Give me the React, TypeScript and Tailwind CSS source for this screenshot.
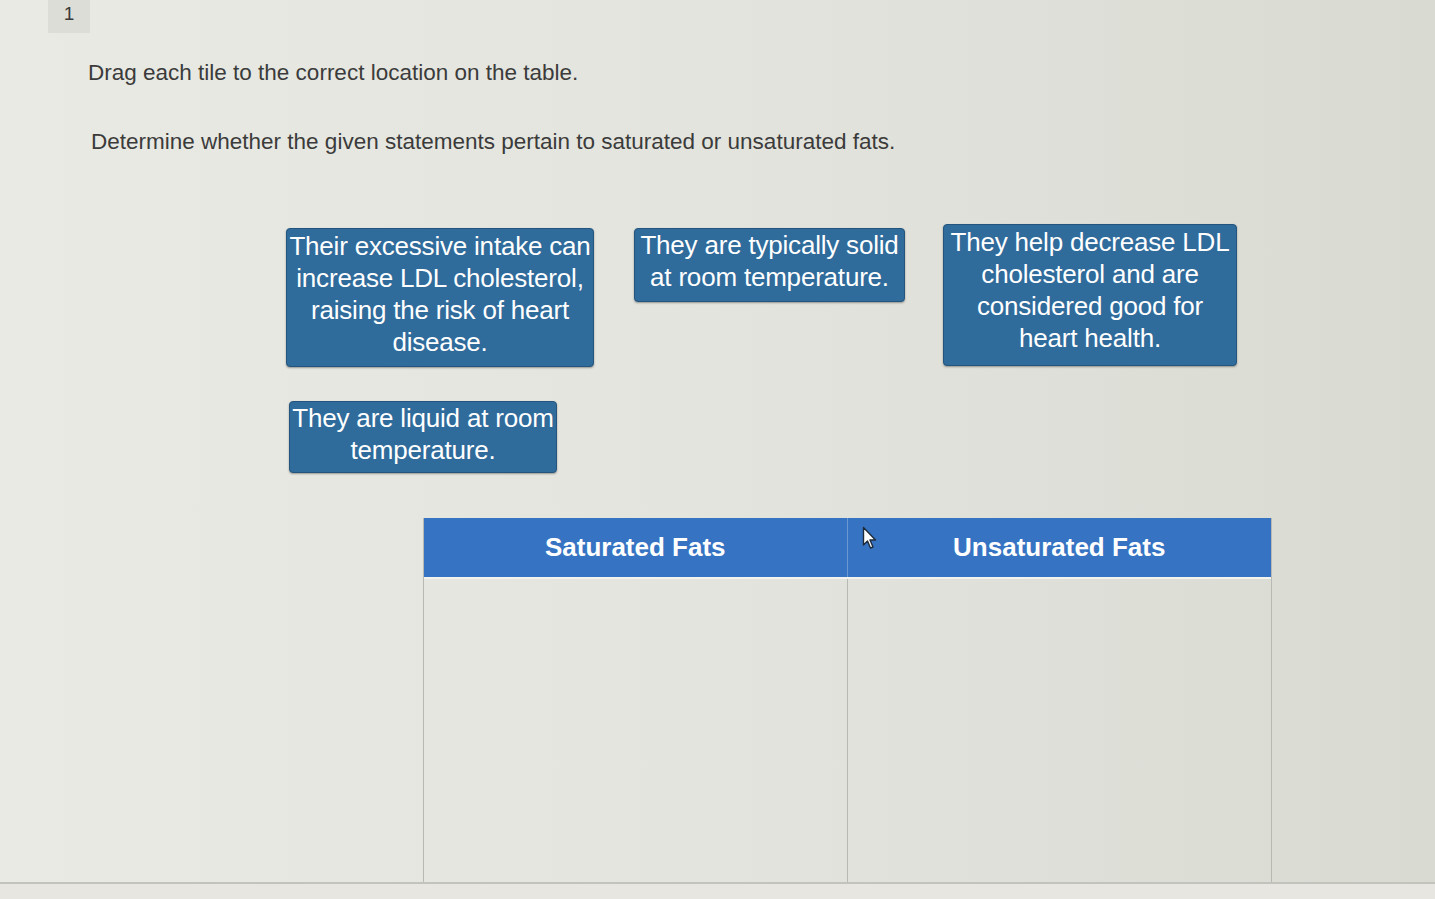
import React from "react";

const tileClass =
  "rounded-[4px] border border-[#23557f] bg-[#2f6b9b] text-center text-white text-[26px] leading-[32px] tracking-[-0.2px] shadow-[0_1px_2px_rgba(0,0,0,0.35)]";

function Cursor() {
  return (
    <svg width="16" height="24" viewBox="0 0 16 24" className="absolute left-[438px] top-[8px]">
      <path
        d="M1.5 1.5 L1.5 19 L5.5 15 L8.5 22 L11 21 L8 14 L13.5 14 Z"
        fill="#ffffff"
        stroke="#1d2a3a"
        strokeWidth="1.4"
        strokeLinejoin="round"
      />
    </svg>
  );
}

export default function App() {
  return (
    <div
      className="flex h-[899px] w-[1435px] flex-col overflow-hidden bg-gradient-to-r from-[#e9eae4] via-[#e3e4dd] to-[#d9dad2] text-[#333]"
      style={{ fontFamily: '"Liberation Sans", Arial, sans-serif' }}
    >
      {/* top tab strip */}
      <div className="flex h-[33px] shrink-0">
        <div className="ml-[48px] flex w-[42px] items-start justify-center bg-[#dcddd6] text-[19px] text-[#3a3a3a]">
          1
        </div>
      </div>

      {/* instructions */}
      <div className="ml-[88px] mt-[28px] text-[22.5px] leading-[24px] text-[#3b3b3b]">
        Drag each tile to the correct location on the table.
      </div>
      <div className="ml-[91px] mt-[45px] text-[22.5px] leading-[24px] text-[#3b3b3b]">
        Determine whether the given statements pertain to saturated or unsaturated fats.
      </div>

      {/* tile pool */}
      <div className="ml-[286px] mt-[70px] flex items-start">
        <div className={`${tileClass} mt-[4px] w-[308px] px-[2px] pt-[1px] pb-[8px]`}>
          Their excessive intake can increase LDL cholesterol, raising the risk of heart disease.
        </div>
        <div className={`${tileClass} ml-[40px] mt-[4px] w-[271px] px-[2px] pt-0 pb-[8px]`}>
          They are typically solid at room temperature.
        </div>
        <div className={`${tileClass} ml-[38px] w-[294px] px-[2px] pt-[1px] pb-[11px]`}>
          They help decrease LDL cholesterol and are considered good for heart health.
        </div>
      </div>
      <div className="ml-[289px] mt-[34px] flex">
        <div className={`${tileClass} w-[268px] px-[2px] pt-0 pb-[6px]`}>
          They are liquid at room temperature.
        </div>
      </div>

      {/* drop table */}
      <div className="ml-[423px] mt-[45px] flex w-[849px] flex-1 flex-col border-x border-[#b9b9b3]">
        <div className="relative grid h-[59px] shrink-0 grid-cols-2 bg-[#3674c3] text-[26px] font-bold text-white">
          <div className="flex items-center justify-center border-r border-[#6c98d2]">Saturated Fats</div>
          <div className="flex items-center justify-center">Unsaturated Fats</div>
          <Cursor />
        </div>
        <div className="grid flex-1 grid-cols-2 border-t-2 border-[#f2f2ee]">
          <div className="border-r border-[#b9b9b3]" />
          <div />
        </div>
      </div>

      {/* bottom edge */}
      <div className="h-[17px] shrink-0 border-t-2 border-[#c3c3bd] bg-[#e7e6e1]" />
    </div>
  );
}
